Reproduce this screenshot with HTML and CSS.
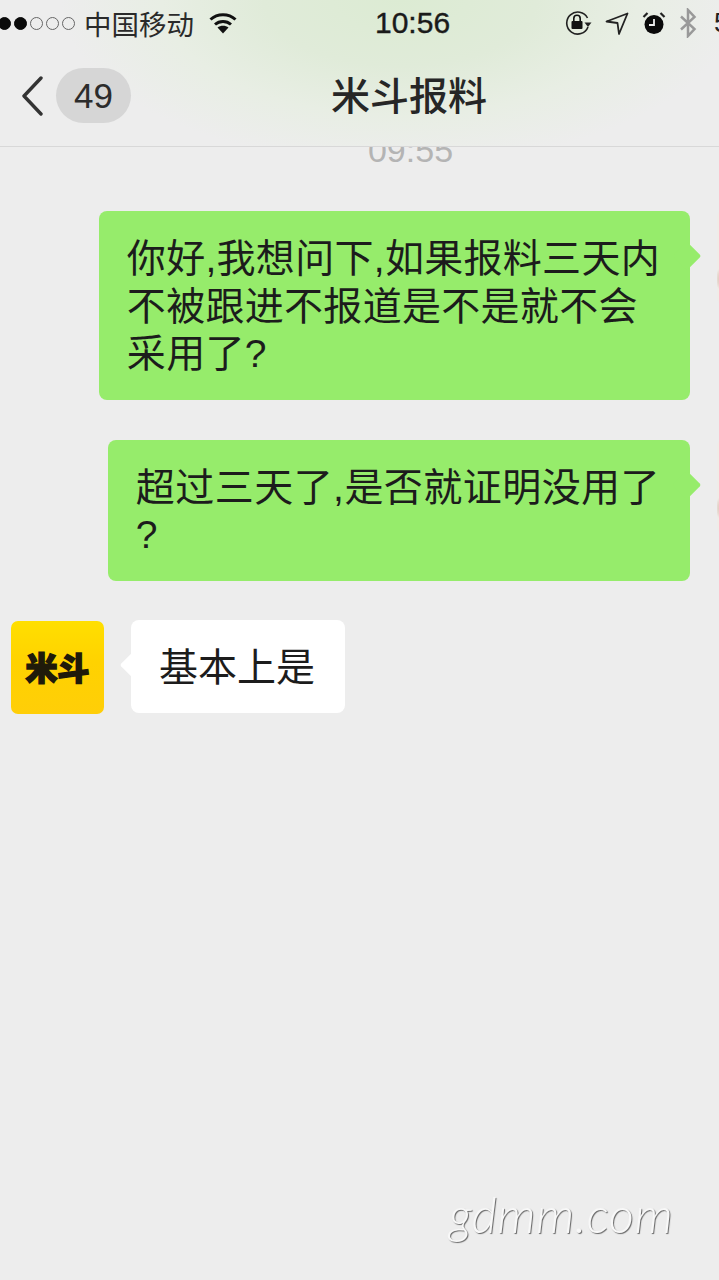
FILE: index.html
```html
<!DOCTYPE html>
<html lang="en">
<head>
  <meta charset="UTF-8" />
  <meta name="viewport" content="width=device-width, initial-scale=1.0" />
  <title>米斗报料</title>
  <link rel="stylesheet" href="styles.css">
</head>
<body>
  <div class="phone">
    <header class="top">
      <!-- Status bar -->
      <div class="status">
        <div class="signal">
          <span class="dot on"></span>
          <span class="dot on"></span>
          <span class="dot"></span>
          <span class="dot"></span>
          <span class="dot"></span>
        </div>
        <span class="carrier">中国移动</span>
        <svg class="wifi" width="28" height="22" viewBox="0 0 28 22">
          <path d="M1.500 7.500C8.500 1 19.500 1 26.500 7.500" fill="none" stroke="#111" stroke-width="3"/>
          <path d="M6 12.500C10.500 8.500 17.500 8.500 22 12.500" fill="none" stroke="#111" stroke-width="3"/>
          <path d="M8.500 15.500C11.500 13 16.500 13 19.500 15.500L14 21.500Z" fill="#111"/>
        </svg>
        <span class="time">10:56</span>
        <svg class="lock" width="28" height="26" viewBox="0 0 28 26">
          <path d="M24 17A11 11 0 1 1 23.500 8" fill="none" stroke="#222" stroke-width="1.600"/>
          <path d="M20.500 12.500H27.500L24 17Z" fill="#222"/>
          <rect x="7.500" y="11" width="11" height="8" rx="1" fill="#111"/>
          <path d="M9.800 11V8.500A3.200 3.200 0 0 1 16.200 8.500V11" fill="none" stroke="#111" stroke-width="1.600"/>
        </svg>
        <svg class="locate" width="24" height="23" viewBox="0 0 24 23">
          <path d="M1.500 9.500L22.500 1.500L14 22L12.500 11Z" fill="none" stroke="#222" stroke-width="1.800" stroke-linejoin="round"/>
        </svg>
        <svg class="alarm" width="24" height="24" viewBox="0 0 24 24">
          <circle cx="12" cy="13.500" r="9.500" fill="#0a0a0a"/>
          <path d="M12 8V14H7" fill="none" stroke="#eee" stroke-width="1.800"/>
          <path d="M1.500 6L5.500 2M22.500 6L18.500 2" stroke="#222" stroke-width="2.200"/>
        </svg>
        <svg class="bt" width="18" height="30" viewBox="0 0 18 30">
          <path d="M2 8.500L15.500 21L9 28V2L15.500 9L2 21.500" fill="none" stroke="#999" stroke-width="2.500"/>
        </svg>
        <span class="battery">5</span>
      </div>

      <!-- Title bar -->
      <nav class="bar">
        <svg class="back" width="22" height="40" viewBox="0 0 22 40">
          <path d="M20 2L3 20L20 38" fill="none" stroke="#333" stroke-width="3.400" stroke-linecap="round" stroke-linejoin="round"/>
        </svg>
        <span class="badge">49</span>
        <h1 class="title">米斗报料</h1>
      </nav>
    </header>

    <!-- Messages -->
    <main class="chat">
      <div class="stamp">09:55</div>

      <div class="row mine">
        <div class="bubble green">你好,我想问下,如果报料三天内<br>不被跟进不报道是不是就不会<br>采用了?</div>
        <div class="face"></div>
      </div>

      <div class="row mine">
        <div class="bubble green wide">超过三天了,是否就证明没用了<br>?</div>
        <div class="face"></div>
      </div>

      <div class="row theirs">
        <div class="logo"><span class="logo-text">米斗</span></div>
        <div class="bubble white">基本上是</div>
      </div>
    </main>

    <div class="mark">gdmm.com</div>
  </div>
</body>
</html>
```

FILE: styles.css
```css
/* Chat screen */
html, body {
  margin: 0;
  padding: 0;
}

body {
  background-color: #ededed;
  color: #222;
  font-family: "Liberation Sans", "Noto Sans CJK SC", sans-serif;
}

.phone {
  position: relative;
  width: 719px;
  height: 1280px;
  overflow: hidden;
  background-color: #ededed;
}

.top {
  height: 146px;
  border-bottom: 1px solid #d8d8d8;
  background: radial-gradient(ellipse 340px 165px at 400px 0, #dcebd3 0%, #e0ebd9 40%, #e8eee4 70%, #ededed 100%);
  position: relative;
  z-index: 1;
}

/* Status bar */
.status {
  display: flex;
  align-items: center;
  height: 46px;
  white-space: nowrap;
}

.status > * {
  flex: none;
}

.signal {
  display: flex;
  gap: 3px;
  margin-left: -2px;
}

.dot {
  width: 13px;
  height: 13px;
  box-sizing: border-box;
  border: 1.500px solid #666;
  border-radius: 50%;
}

.dot.on {
  background-color: #0a0a0a;
  border-color: #0a0a0a;
}

.carrier {
  margin-left: 9px;
  width: 110px;
  font-size: 27.500px;
  color: #2a2a2a;
}

.wifi {
  margin-left: 15px;
}

.time {
  margin-left: 138px;
  width: 172px;
  font-size: 30px;
  font-weight: 500;
  color: #1a1a1a;
  -webkit-text-stroke: 0.400px #1a1a1a;
}

.lock {
  margin-left: 17px;
}

.locate {
  margin-left: 13px;
}

.alarm {
  margin-left: 13px;
}

.bt {
  margin-left: 13px;
}

.battery {
  margin-left: 17px;
  font-size: 27px;
  color: #222;
}

/* Title bar */
.bar {
  display: flex;
  align-items: center;
  height: 98px;
}

.back {
  margin-left: 21px;
  margin-top: 2px;
}

.badge {
  margin-left: 13px;
  width: 75px;
  height: 55px;
  line-height: 56px;
  text-align: center;
  border-radius: 28px;
  background-color: #d6d6d6;
  color: #2c2c2c;
  font-size: 35px;
}

.title {
  margin: 0 0 4px 200px;
  font-size: 39px;
  font-weight: 500;
  color: #262626;
}

/* Messages */
.chat {
  display: flex;
  flex-direction: column;
}

.stamp {
  margin-top: -13px;
  margin-left: 102px;
  height: 32px;
  line-height: 32px;
  text-align: center;
  font-size: 34px;
  color: #b4b4b4;
}

.row {
  display: flex;
  align-items: flex-start;
}

.mine {
  justify-content: flex-end;
  margin-top: 45px;
  margin-right: -91px;
}

.mine + .mine {
  margin-top: 40px;
}

.theirs {
  margin-top: 40px;
  margin-left: 11px;
}

.bubble {
  position: relative;
  box-sizing: border-box;
  padding: 24px 30px 22px 28px;
  border-radius: 8px;
  font-size: 39px;
  line-height: 47.500px;
  letter-spacing: 0.300px;
  white-space: nowrap;
  color: #1c1c1c;
}

.wide {
  letter-spacing: 0.450px;
}

/* Little tail on the side of the bubble */
.bubble::after {
  content: "";
  position: absolute;
  top: 35px;
  width: 20px;
  height: 20px;
  transform: rotate(45deg);
  border-radius: 2px;
}

.green {
  background-color: #96ec6b;
}

.green::after {
  right: -7px;
  background-color: #96ec6b;
}

.white {
  background-color: #fff;
  margin-left: 27px;
  margin-top: -1px;
  height: 93px;
  letter-spacing: 0;
}

.white::after {
  left: -7px;
  background-color: #fff;
}

.face {
  flex: none;
  width: 93px;
  height: 93px;
  margin-left: 27px;
  border-radius: 6px;
  background: radial-gradient(circle 16px at 14px 68px, #b98d7c 0%, #d9b9aa 60%, #f0ece8 100%);
  background-color: #f0ece8;
}

.logo {
  flex: none;
  display: flex;
  align-items: center;
  justify-content: center;
  width: 93px;
  height: 93px;
  border-radius: 7px;
  background: linear-gradient(#ffdf00, #ffd200 45%, #ffce08);
}

.logo-text {
  margin-bottom: 3px;
  font-size: 32px;
  font-weight: 900;
  color: #1f1a0a;
  -webkit-text-stroke: 1.500px #1f1a0a;
  white-space: nowrap;
}

/* Watermark over the picture */
.mark {
  position: absolute;
  left: 449px;
  top: 1185px;
  font-family: "Lato", sans-serif;
  font-style: italic;
  font-weight: 300;
  font-size: 49px;
  letter-spacing: 0.500px;
  color: #f8f8f8;
  text-shadow: 1px 1px 1px #666;
}
```
